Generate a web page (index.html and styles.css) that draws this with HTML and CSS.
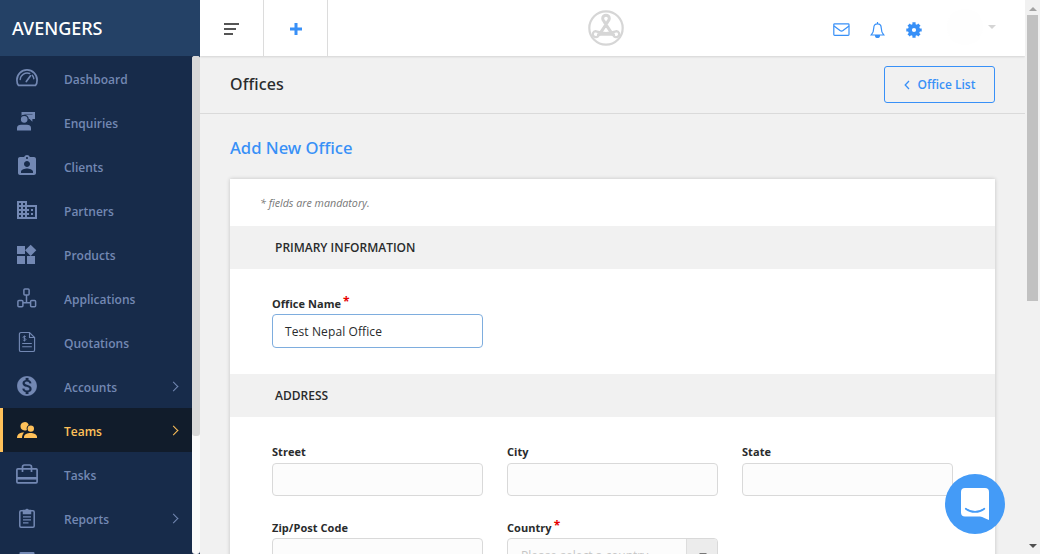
FILE: index.html
```html
<!DOCTYPE html>
<html lang="en">
<head>
<meta charset="utf-8">
<title>Offices</title>
<link rel="stylesheet" href="styles.css">
</head>
<body>
<div class="app">
  <aside class="sidebar">
    <div class="brand">AVENGERS</div>
    <div class="side-body">
      <nav class="menu">
        <a class="item"><svg viewBox="0 0 24 24" fill="none" stroke="currentColor" stroke-width="1.7" stroke-linecap="round"><path d="M3.5 19.3C2.3 18.2 1.9 16 1.9 14a10.100 10.100 0 0 1 20.200 0c0 2-.4 4.200-1.600 5.300z" stroke-linejoin="round"/><path d="M5.200 13.500a7 7 0 0 1 9.500-6M17.300 9.200a7 7 0 0 1 1.500 3.500" stroke-width="1.400"/><path d="M11.300 15.500 15.500 9.800"/></svg><span>Dashboard</span></a>
        <a class="item"><svg viewBox="0 0 24 24" fill="currentColor"><path d="M6.500 2H20v7h-2.600v2.800L14.600 9h-8z"/><path d="M9.500 4.400h8" stroke="#172b4a" stroke-width=".5"/><circle cx="9.200" cy="9.300" r="4" stroke="#172b4a" stroke-width="1.300"/><path d="M2 20.500v-2.600c0-2 1.800-3.200 4-3.200h6c2.200 0 4 1.200 4 3.200v2.600z"/></svg><span>Enquiries</span></a>
        <a class="item"><svg viewBox="0 0 24 24" fill="currentColor"><path d="M19 3h-4.180C14.400 1.840 13.300 1 12 1c-1.300 0-2.400.84-2.820 2H5c-1.100 0-2 .9-2 2v14c0 1.100.9 2 2 2h14c1.100 0 2-.9 2-2V5c0-1.100-.9-2-2-2zm-7 0c.55 0 1 .45 1 1s-.45 1-1 1-1-.45-1-1 .45-1 1-1zm0 4c1.660 0 3 1.340 3 3s-1.340 3-3 3-3-1.340-3-3 1.340-3 3-3zm6 12H6v-1.400c0-2 4-3.100 6-3.100s6 1.100 6 3.100V19z"/></svg><span>Clients</span></a>
        <a class="item"><svg viewBox="0 0 24 24" fill="currentColor"><path d="M12 7V3H2v18h20V7H12zM6 19H4v-2h2v2zm0-4H4v-2h2v2zm0-4H4V9h2v2zm0-4H4V5h2v2zm4 12H8v-2h2v2zm0-4H8v-2h2v2zm0-4H8V9h2v2zm0-4H8V5h2v2zm10 12h-8v-2h2v-2h-2v-2h2v-2h-2V9h8v10zm-2-8h-2v2h2v-2zm0 4h-2v2h2v-2z"/></svg><span>Partners</span></a>
        <a class="item"><svg viewBox="1 -1 24 24" fill="currentColor"><path d="M13 13v8h8v-8h-8zM3 21h8v-8H3v8zM3 3v8h8V3H3zm13.660-1.310L11 7.340 16.660 13l5.660-5.660-5.660-5.650z"/></svg><span>Products</span></a>
        <a class="item"><svg viewBox="0 0 24 24" fill="none" stroke="currentColor" stroke-width="1.500"><rect x="8.900" y="3" width="5.200" height="6" rx="1"/><rect x="2.900" y="14.500" width="5" height="6.300" rx="1"/><rect x="15.600" y="14.500" width="5" height="6.300" rx="1"/><path d="M11.500 9v7.500M8 16.800h7.500"/></svg><span>Applications</span></a>
        <a class="item"><svg viewBox="0 0 24 24" fill="none" stroke="currentColor" stroke-width="1.150"><path d="M14.500 2.500H6a1.600 1.600 0 0 0-1.600 1.600v15.800A1.600 1.600 0 0 0 6 21.500h12a1.600 1.600 0 0 0 1.600-1.600V7.500zv5h5M7.200 13.500h9.600M7.200 16.700h9.600"/><path d="M11 6.800c-.8-.8-3-.7-3 .5 0 1.400 3 .8 3 2.200 0 1.200-2.300 1.200-3.100.4M9.500 5.500v6" stroke-width=".85"/></svg><span>Quotations</span></a>
        <a class="item"><svg viewBox="0 0 24 24" fill="currentColor"><path d="M12 2C6.480 2 2 6.480 2 12s4.480 10 10 10 10-4.480 10-10S17.520 2 12 2zm1.410 16.090V20h-2.670v-1.930c-1.710-.36-3.160-1.460-3.270-3.400h1.960c.1 1.050.82 1.870 2.650 1.870 1.960 0 2.400-.98 2.400-1.590 0-.83-.44-1.610-2.670-2.140-2.480-.6-4.180-1.620-4.180-3.670 0-1.720 1.390-2.840 3.110-3.210V4h2.670v1.950c1.860.45 2.790 1.860 2.850 3.390H14.300c-.05-1.110-.64-1.870-2.220-1.870-1.500 0-2.400.68-2.400 1.640 0 .84.65 1.390 2.670 1.910s4.180 1.390 4.180 3.910c-.01 1.830-1.380 2.830-3.120 3.160z" stroke="#172b4a" stroke-width=".2"/></svg><span>Accounts</span><i class="chev"></i></a>
        <a class="item active"><svg viewBox="0 0 24 24" fill="currentColor"><path d="M2 20c0-4 3-5.700 7.300-5.600C7.700 15.700 7 17.600 7 20z"/><path d="M9.500 12.500a4.200 4.200 0 1 1 4.200-5.500 4.300 4.300 0 0 0-1.800 5 4 4 0 0 1-2.400.5z"/><circle cx="15.800" cy="10.600" r="3.200"/><path d="M9 20v-1.200c0-2.600 3.500-3.900 6.500-3.900s6.500 1.300 6.500 3.900V20z"/></svg><span>Teams</span><i class="chev"></i></a>
        <a class="item"><svg viewBox="0 0 24 24" fill="none" stroke="currentColor" stroke-width="1.700"><rect x="1.900" y="6.800" width="20.200" height="14" rx="1"/><path d="M7.500 10V5a2 2 0 0 1 2-2h5a2 2 0 0 1 2 2v5"/><path d="M2 16.300h20" stroke-width="2.600"/></svg><span>Tasks</span></a>
        <a class="item"><svg viewBox="0 0 24 24" fill="none" stroke="currentColor" stroke-width="1.500"><rect x="4.800" y="4.800" width="14.400" height="16.400" rx="1.200"/><path d="M8.500 4.500h2a1.600 1.600 0 0 1 3 0h2v3h-7z" fill="currentColor"/><path d="M8 10.800h8M8 13.800h8M8 16.900h5.500" stroke-width="1.300"/></svg><span>Reports</span><i class="chev"></i></a>
        <a class="item"><svg viewBox="0 0 24 24" fill="currentColor"><rect x="4.500" y="2" width="15" height="18" rx="1"/></svg></a>
      </nav>
      <div class="side-scroll"><div class="side-thumb"></div></div>
    </div>
  </aside>
  <div class="main">
    <header class="topbar">
      <div class="cell"><svg class="lines" viewBox="0 0 15 12"><path d="M0 1h15M0 6h12M0 11h9" stroke="#555" stroke-width="2"/></svg></div>
      <div class="cell plus-cell"><svg class="plus" viewBox="0 0 12 12"><path d="M6 0v12M0 6h12" stroke="#3890f7" stroke-width="3"/></svg></div>
      <div class="logo-wrap"><svg class="logo" viewBox="0 0 36 36" fill="none" stroke="#d6d6d6"><circle cx="18" cy="18" r="16.700" stroke-width="2.200"/><path d="M10 26.200 20.300 11a3.700 3.700 0 1 0-4.600 0L26.500 26a3 3 0 1 0 2.500-4.800H7a3 3 0 1 0 3 5" stroke-width="0"/><path d="M10.500 25.500C14 20.500 17 16.500 20.300 10.800a3.300 3.300 0 1 0-4.600 0C18.800 16.500 22 20.500 25.500 25.500" stroke-width="3"/><path d="M10.500 25.500a3 3 0 1 1-3-4.300c3 .8 6 1.900 10.500 1.900s7.500-1.100 10.500-1.900a3 3 0 1 1-3 4.300M9 24.600h18" stroke-width="2.300"/></svg></div>
      <div class="tools">
        <svg width="17" height="13" viewBox="0 0 17 13" fill="none" stroke="#3890f7" stroke-width="1.200"><rect x=".8" y=".8" width="15.200" height="11.600" rx=".8"/><path d="M1 3l6 4.500c1 .7 2 .7 3 0L16 3"/></svg>
        <svg width="15" height="16" viewBox="0 0 15 16" fill="none" stroke="#3890f7" stroke-width="1.200"><path d="M7.500 1.800c-2.500 0-3.700 1.800-3.700 4 0 3.200-.6 5-2.600 7.200h12.600c-2-2.200-2.600-4-2.600-7.200 0-2.200-1.200-4-3.700-4zM7.500 0v2"/><path d="M5.500 13.500a2 2 0 0 0 4 0z" fill="#3890f7"/></svg>
        <svg width="16" height="16" viewBox="0 0 16 16"><circle cx="8" cy="8" r="4.100" fill="none" stroke="#3890f7" stroke-width="4"/><path d="M8 .3v3M8 12.700v3M.3 8h3M12.700 8h3M2.600 2.600l2.100 2.100M11.300 11.300l2.100 2.100M2.600 13.400l2.100-2.100M11.300 4.700l2.100-2.100" stroke="#3890f7" stroke-width="3.200"/></svg>
        <div class="avatar"></div>
        <div class="caret"></div>
      </div>
    </header>
    <div class="titlebar"><h1>Offices</h1><a class="btn"><svg width="6" height="10" viewBox="0 0 6 10" fill="none" stroke="#3890f7" stroke-width="1.300"><path d="M5 1 1.200 5 5 9"/></svg><span>Office List</span></a></div>
    <div class="content">
      <h2>Add New Office</h2>
      <section class="card">
        <p class="note">* fields are mandatory.</p>
        <h3>PRIMARY INFORMATION</h3>
        <div class="fields first">
          <label class="field"><span class="lab">Office Name<sup>*</sup></span><span class="input focus">Test Nepal Office</span></label>
        </div>
        <h3>ADDRESS</h3>
        <div class="fields">
          <label class="field"><span class="lab">Street</span><span class="input"></span></label>
          <label class="field"><span class="lab">City</span><span class="input"></span></label>
          <label class="field"><span class="lab">State</span><span class="input"></span></label>
          <label class="field low"><span class="lab">Zip/Post Code</span><span class="input"></span></label>
          <label class="field low"><span class="lab">Country<sup>*</sup></span><span class="input select"><span class="ph">Please select a country</span><span class="drop"><i></i></span></span></label>
        </div>
      </section>
    </div>
  </div>
  <div class="scroll"><i class="up"></i><div class="thumb"></div><i class="down"></i></div>
  <div class="chat"><svg width="28" height="32" viewBox="0 0 28 32"><path d="M4 0h20a4 4 0 0 1 4 4v28c-3.500-1-6-3.600-9-3.600H4a4 4 0 0 1-4-4V4a4 4 0 0 1 4-4z" fill="#fff"/><path d="M4.800 20.700c5.500 4.300 13 4.300 18.500 0" fill="none" stroke="#449bf7" stroke-width="1.800" stroke-linecap="round"/></svg></div>
</div>
</body>
</html>
```
FILE: styles.css
```css
* { box-sizing: border-box; }
body { margin: 0; font-family: "Open Sans", "Noto Sans", sans-serif; font-size: 12px; color: #292b2c; background: #f1f1f1; overflow: hidden; }
.app { display: flex; width: 1040px; height: 554px; overflow: hidden; }
h1, h2, h3, p { margin: 0; font-weight: 600; }

.sidebar { width: 200px; flex: none; display: flex; flex-direction: column; background: #172b4a; }
.brand { height: 56px; flex: none; padding-left: 12px; background: #244166; color: #fff; font-family: "Noto Sans", sans-serif; font-size: 18px; font-weight: 500; line-height: 57px; }
.side-body { display: flex; height: 498px; overflow: hidden; }
.menu { width: 192px; }
.item { display: flex; align-items: center; height: 44px; padding-left: 15px; color: #7388b3; font-weight: 600; font-size: 12px; }
.item svg { width: 24px; height: 24px; margin-right: 25px; flex: none; }
.item span { flex: 1; padding-top: 3px; }
.item.active { background: #111c2b; color: #ffc15a; border-left: 3px solid #ffc15a; padding-left: 12px; }
.chev { width: 7px; height: 7px; margin: 1px 15px 0 0; border-top: 1.500px solid; border-right: 1.500px solid; transform: rotate(45deg); }
.side-scroll { width: 8px; background: #fafafa; border-radius: 3px; }
.side-thumb { height: 380px; background: #d9d9d9; border-radius: 3px; }

.main { width: 825px; flex: none; display: flex; flex-direction: column; height: 554px; overflow: hidden; }
.topbar { height: 56px; flex: none; display: flex; background: #fff; box-shadow: 0 1px 2px rgba(0,0,0,.12); position: relative; }
.cell { width: 64px; display: flex; align-items: center; justify-content: center; border-right: 1px solid #dcdcdc; padding-top: 2px; }
.plus-cell { padding-left: 0; }
.lines { width: 15px; height: 12px; }
.plus { width: 12px; height: 12px; }
.logo-wrap { flex: 1; padding: 10px 0 0 260px; }
.logo { width: 36px; height: 36px; display: block; }
.tools { display: flex; align-items: center; gap: 20.500px; width: 192.500px; padding-top: 3px; }
.avatar { width: 36px; height: 36px; margin: -6px 0 0 5px; border-radius: 50%; background: #fefefe; }
.caret { margin: -5px 0 0 -16px; border: 4px solid transparent; border-top-color: #d5d5d5; border-bottom: 0; }
.titlebar { height: 58px; flex: none; display: flex; justify-content: space-between; align-items: center; padding: 0 30px; border-bottom: 1px solid #dadada; }
h1 { font-family: "Noto Sans", sans-serif; font-size: 16px; font-weight: 500; letter-spacing: .1px; margin-top: -2px; }
.btn { width: 111px; height: 37px; display: flex; align-items: center; justify-content: center; gap: 8px; border: 1px solid #3890f7; border-radius: 3px; color: #3890f7; font-weight: 600; font-size: 12px; }
.content { padding: 0 30px; }
h2 { height: 65px; line-height: 68px; color: #3890f7; font-family: "Noto Sans", sans-serif; font-size: 16.600px; font-weight: 500; }
.card { height: 500px; background: #fff; box-shadow: 0 0 4px rgba(0,0,0,.2); }
.note { height: 47px; padding-left: 30px; line-height: 48px; font-size: 10.700px; font-style: italic; font-weight: 400; color: #777; }
h3 { height: 43px; padding-left: 45px; background: #f1f1f1; line-height: 43px; font-size: 12px; }
.fields { display: grid; grid-template-columns: repeat(3, 211px); column-gap: 24px; row-gap: 21px; padding: 25px 42px 0; }
.fields.first { height: 105px; }
.lab { display: block; height: 21px; line-height: 20px; font-size: 11px; font-weight: 700; letter-spacing: .05px; white-space: nowrap; }
.fields.first .lab { height: 20px; }
.low .lab { line-height: 22px; }
.lab sup { position: relative; top: 3px; margin-left: 2px; color: #e60000; font-size: 12px; line-height: 0; }
.input { display: flex; height: 33px; border: 1px solid #d9d9d9; border-radius: 4px; background: #fcfcfc; }
.input.focus { height: 34px; padding-left: 12px; border-color: #7eadde; background: #fff; line-height: 33px; font-size: 12px; letter-spacing: .1px; }
.select { overflow: hidden; }
.ph { flex: 1; padding-left: 13px; line-height: 33px; color: #c5c5c5; font-size: 12px; }
.drop { width: 31px; border-left: 1px solid #ddd; background: #ececec; padding: 14px 0 0 12px; }
.drop i { display: block; width: 0; border: 4px solid transparent; border-top-color: #777; border-bottom: 0; }

.scroll { width: 15px; flex: none; background: #f1f1f1; display: flex; flex-direction: column; align-items: center; }
.thumb { width: 11px; height: 286px; margin-top: 4px; background: #c1c1c1; }
.up { margin-top: 7px; border: 4px solid transparent; border-bottom-color: #a3a3a3; border-top: 0; }
.down { margin: auto 0 6px; border: 4px solid transparent; border-top-color: #505050; border-bottom: 0; }
.chat { position: absolute; left: 945px; top: 474px; width: 60px; height: 60px; display: flex; align-items: center; justify-content: center; border-radius: 50%; background: #449bf7; }
```
